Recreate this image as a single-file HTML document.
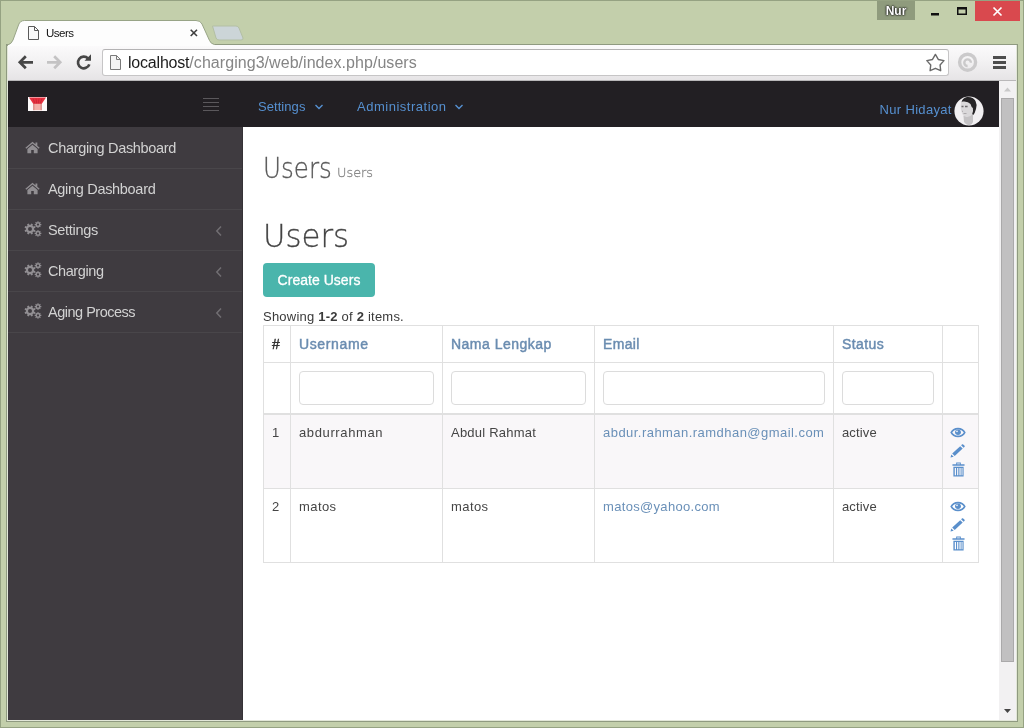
<!DOCTYPE html>
<html lang="en">
<head>
<meta charset="utf-8">
<title>Users</title>
<style>
*{box-sizing:border-box;margin:0;padding:0}
html,body{width:1024px;height:728px;overflow:hidden}
body{background:#c3cfab;font-family:"Liberation Sans",sans-serif;font-size:13px;color:#333;position:relative}
.abs{position:absolute}
#url,#tabtitle,#nurbadge,#page{will-change:transform}
span,a,b{white-space:nowrap}
/* window frame */
#frame-outer{left:0;top:0;width:1024px;height:728px;border:1px solid #95a282}
#frame-inner{left:6px;top:44px;width:1012px;height:678px;border:1px solid #8f9a80}
#frame-hl{left:7px;top:45px;width:1010px;height:676px;border:1px solid #e2e7d8;border-top:none}
#tabsvg{left:0;top:0;width:1024px;height:46px}
#tabtitle{left:46px;top:26px;font-size:11.500px;color:#111;line-height:15px}
#nurbadge{left:877px;top:1px;width:38px;height:19px;background:#8f9b7d;color:#fff;font-weight:bold;font-size:12px;line-height:20px;text-align:center;text-shadow:0 0 2px #1a1a1a,0 0 2px #1a1a1a,0 0 1px #1a1a1a}
#closebtn{left:975px;top:1px;width:45px;height:19.500px;background:#d9494e}
#toolbar{left:8px;top:45px;width:1008px;height:36px;background:linear-gradient(#fbfafb 0%,#f3f2f3 45%,#e6e4e6 100%);border-bottom:1px solid #b9b8b9}
#urlbox{left:102px;top:49px;width:847px;height:27px;background:#fff;border:1px solid #c6c5c6;border-top-color:#b4b3b4;border-radius:3px}
#url{left:128px;top:53px;font-size:16px;line-height:19px;color:#858585;white-space:nowrap}
#url b{font-weight:normal;color:#1c1c1c}
#page{left:8px;top:81px;width:991px;height:639px;background:#fff;overflow:hidden}
#scroll{left:999px;top:81px;width:17px;height:639px;background:#f2f1f2}
#thumb{left:1001px;top:98px;width:13px;height:564px;background:#c1c0c1;border:1px solid #aaa9aa}
#navbar{left:0;top:0;width:991px;height:46px;background:#221f23}
#sidebar{left:0;top:46px;width:235px;height:593px;background:#3f3b40;border-right:1px solid #353236;padding-top:1px}
.sitem{position:relative;height:41px;border-bottom:1px solid #49464a;color:#d2d2d2;font-size:14.500px;line-height:40px;padding-left:40px;white-space:nowrap}
.sitem svg.ic{position:absolute;left:16.500px;top:13px}
.sitem svg.hm{left:17px;top:12.500px;width:15px;height:13px}
.sitem svg.gr{left:15.500px;top:11px}
.sitem svg.ch{position:absolute;left:207px;top:15px}
.nl{color:#5690d0;font-size:13px;line-height:20px;white-space:nowrap}
.lt{font-family:"DejaVu Sans Light","DejaVu Sans","Liberation Sans",sans-serif;font-weight:200;-webkit-text-stroke:.3px currentColor;white-space:nowrap;transform-origin:0 0;line-height:1}
#btn{left:255px;top:182px;width:112px;height:34px;background:#4ab5ac;border-radius:4px;color:#fff;font-size:14px;line-height:34px;text-align:center;-webkit-text-stroke:.3px #fff}
#summary{left:255px;top:228px;font-size:13px;line-height:16px;color:#3a3a3a;white-space:nowrap}
table{position:absolute;left:255px;top:244px;width:716px;table-layout:fixed;border-collapse:separate;border-spacing:0;border-top:1px solid #e0e0e0;border-left:1px solid #e0e0e0;font-size:13px;color:#454545}
td,th{border-right:1px solid #e0e0e0;border-bottom:1px solid #e0e0e0;padding:8px;vertical-align:top;text-align:left;line-height:20px;white-space:nowrap;position:relative;overflow:visible}
th{height:37px;color:#6a8cb0;font-weight:normal;font-size:14px;-webkit-text-stroke:.45px #6a8cb0}
th.n{color:#333;font-size:14px;-webkit-text-stroke:.45px #333}
tr.f td{height:52px;border-bottom-width:2px}
tr.odd td,tr.r2 td{height:74px}
.inp{height:34px;border:1px solid #dcdcdc;border-radius:4px;background:#fff}
tr.odd td{background:#f9f7f9}
td a{color:#6a90b8;text-decoration:none}
svg.ai{position:absolute;left:7px}
#t-tab{letter-spacing:-0.51px}
#t-url1{letter-spacing:-0.20px}
#t-url2{letter-spacing:0.05px}
#t-nav1{letter-spacing:0.06px}
#t-nav2{letter-spacing:0.51px}
#t-nav3{letter-spacing:0.32px}
#t-s1{letter-spacing:-0.32px}
#t-s2{letter-spacing:-0.31px}
#t-s3{letter-spacing:-0.31px}
#t-s4{letter-spacing:-0.41px}
#t-s5{letter-spacing:-0.49px}
#t-btn{letter-spacing:0.03px}
#t-sum{letter-spacing:0.22px}
#t-th1{letter-spacing:0.63px}
#t-th2{letter-spacing:0.48px}
#t-th3{letter-spacing:0.36px}
#t-th4{letter-spacing:0.40px}
#t-a1{letter-spacing:0.62px}
#t-a2{letter-spacing:0.22px}
#t-a3{letter-spacing:0.46px}
#t-a4{letter-spacing:0.14px}
#t-b1{letter-spacing:0.42px}
#t-b2{letter-spacing:0.42px}
#t-b3{letter-spacing:0.32px}
#t-b4{letter-spacing:0.14px}
</style>
</head>
<body>
<div class="abs" id="frame-outer"></div>
<div class="abs" id="frame-inner"></div>
<div class="abs" id="frame-hl"></div>
<div class="abs" id="toolbar"></div>
<div class="abs" id="urlbox"></div>
<svg class="abs" id="tabsvg" viewBox="0 0 1024 46">
  <path d="M7.500 46 L7.500 45 Q11.500 44 13 40 L18.500 25 Q20 20.500 24.500 20.500 L196 20.500 Q200.500 20.500 202 24 L209.500 40.500 Q211 44 214.500 44.500 L214.500 46 Z" fill="#fdfdfd"/>
  <path d="M7.500 46 L7.500 45 Q11.500 44 13 40 L18.500 25 Q20 20.500 24.500 20.500 L196 20.500 Q200.500 20.500 202 24 L209.500 40.500 Q211 44 214.500 44.500" fill="none" stroke="#98a487" stroke-width="1"/>
  <path d="M212.500 26 L236 26 Q238 26 239 28 L243 38 Q243.500 40 241 40 L219 40 Q217 40 216 38 Z" fill="#ccd5d8" stroke="#b3bfa4" stroke-width="1"/>
  <path d="M28.500 26.500 h6 l4 4 v9 h-10 z" fill="#fafafa" stroke="#5a5a5a" stroke-width="1"/>
  <path d="M34.500 26.500 v4 h4" fill="none" stroke="#5a5a5a" stroke-width="1"/>
  <path d="M190.700 29.700 l6.300 6.300 M197 29.700 l-6.300 6.300" stroke="#3f3f3f" stroke-width="1.600"/>
</svg>
<div class="abs" id="tabtitle"><span id="t-tab">Users</span></div>
<div class="abs" id="nurbadge">Nur</div>
<div class="abs" id="closebtn"></div>
<svg class="abs" style="left:925px;top:0;width:99px;height:22px" viewBox="925 0 99 22">
  <rect x="931" y="13" width="8" height="2.500" fill="#111"/>
  <rect x="957.750" y="7.750" width="8.500" height="6.500" fill="none" stroke="#111" stroke-width="1.500"/>
  <rect x="957" y="7" width="10" height="2.500" fill="#111"/>
  <path d="M993.500 7.500 l8 8 M1001.500 7.500 l-8 8" stroke="#fff" stroke-width="1.700"/>
</svg>
<svg class="abs" style="left:8px;top:44px;width:1008px;height:37px" viewBox="8 44 1008 37">
  <path d="M33 62.300 H20.500 M25.800 56.300 L19.800 62.300 L25.800 68.300" fill="none" stroke="#474747" stroke-width="2.700"/>
  <path d="M47 62.300 H59.500 M54.200 56.300 L60.200 62.300 L54.200 68.300" fill="none" stroke="#c4c3c4" stroke-width="2.700"/>
  <path d="M88 58.500 A5.800 5.800 0 1 0 89.300 64.300" fill="none" stroke="#474747" stroke-width="2.700"/>
  <path d="M84.500 60.800 L91 60.800 L91 54.300 Z" fill="#474747"/>
  <path d="M110.500 55.500 h6 l4 4 v10 h-10 z" fill="#f4f4f4" stroke="#7a7a7a" stroke-width="1"/>
  <path d="M116.500 55.500 v4 h4" fill="none" stroke="#7a7a7a" stroke-width="1"/>
  <path d="M935.40 54.40 L938.28 59.44 L943.96 60.62 L940.06 64.91 L940.69 70.68 L935.40 68.30 L930.11 70.68 L930.74 64.91 L926.84 60.62 L932.52 59.44 Z" fill="#fff" stroke="#6a6a6a" stroke-width="1.400" stroke-linejoin="round"/>
  <circle cx="967.600" cy="62.200" r="8" fill="none" stroke="#cbcacb" stroke-width="3.400"/>
  <path d="M967.600 66 a3.300 3.300 0 1 1 3.300 -3.300" fill="none" stroke="#cbcacb" stroke-width="2.400"/>
  <rect x="993" y="56" width="13" height="3" fill="#4d4d4d"/>
  <rect x="993" y="61" width="13" height="3" fill="#4d4d4d"/>
  <rect x="993" y="66" width="13" height="3" fill="#4d4d4d"/>
</svg>
<div class="abs" id="url"><b id="t-url1">localhost</b><span id="t-url2">/charging3/web/index.php/users</span></div>

<div class="abs" id="page">
  <div class="abs" id="navbar">
    <svg class="abs" style="left:20px;top:16px;width:19px;height:14px" viewBox="0 0 19 14">
      <rect width="19" height="14" fill="#fdfafa"/>
      <path d="M5.500 6 H13.500 V13.200 H5.500 Z" fill="#f3b0a9"/>
      <path d="M5.800 6 V13.200 M13.200 6 V13.200" stroke="#cf6f6b" stroke-width=".9"/>
      <path d="M1 0.400 H18 L13.800 6.800 H5.200 Z" fill="#e8303f"/>
      <path d="M5 1.500 L7 6.500 M8 1.500 L8.700 6.500 M11 1.500 L10.300 6.500 M14 1.500 L12 6.500" stroke="#c42635" stroke-width=".8"/>
    </svg>
    <svg class="abs" style="left:194px;top:16px;width:18px;height:14px" viewBox="0 0 18 14">
      <path d="M1 1.500 H17 M1 5.500 H17 M1 9.500 H17 M1 13.500 H17" stroke="#5b585c" stroke-width="1"/>
    </svg>
    <div class="abs nl" style="left:250px;top:16px"><span id="t-nav1">Settings</span></div>
    <svg class="abs" style="left:306px;top:22px;width:10px;height:8px" viewBox="0 0 10 8"><path d="M1.500 2 L5 5.500 L8.500 2" fill="none" stroke="#5690d0" stroke-width="1.400"/></svg>
    <div class="abs nl" style="left:349px;top:16px"><span id="t-nav2">Administration</span></div>
    <svg class="abs" style="left:446px;top:22px;width:10px;height:8px" viewBox="0 0 10 8"><path d="M1.500 2 L5 5.500 L8.500 2" fill="none" stroke="#5690d0" stroke-width="1.400"/></svg>
    <div class="abs nl" style="left:871.600px;top:19px"><span id="t-nav3">Nur Hidayat</span></div>
    <svg class="abs" style="left:946px;top:14.500px;width:30px;height:30px" viewBox="0 0 30 30">
      <defs><clipPath id="av"><circle cx="15" cy="15" r="14.600"/></clipPath></defs>
      <circle cx="15" cy="15" r="14.600" fill="#f1eff1"/>
      <g clip-path="url(#av)">
      <path d="M9.500 20 L10 26 Q12 29 15 29.500 Q18 29 19 26 L19 18 Z" fill="#c4c2c4"/>
      <path d="M6.800 8 Q7.500 5 11 5 L16 6 Q18.500 9 18.500 13 L18.500 18 Q16 21.500 12.500 21 Q9 20.500 7.800 16.500 Q6.200 13 6.800 8 Z" fill="#dad8da"/>
      <path d="M7.500 6.500 Q8 2 13 1 Q19 0.500 21.500 5 Q23.500 9 22 13 Q21 17 19.300 19 L18.200 18 Q19.500 15 18.800 12 Q17.500 11.500 16.500 8 Q14 5 9 5.500 Q8 5.500 7.500 6.500 Z" fill="#262426"/>
      <path d="M7.500 10.500 h2 M11 10.500 h2.600" stroke="#6d6a6d" stroke-width="1.300"/>
      <path d="M9 15 l-1 .6 M9.500 17.500 h3" stroke="#a7a4a7" stroke-width=".9"/>
      </g>
    </svg>
  </div>
  <div class="abs" id="sidebar">
    <div class="sitem"><svg class="ic hm" width="16" height="14" viewBox="0 0 16 14"><path d="M8 0.800 L0.300 7.300 L1.300 8.400 L8 2.800 L14.700 8.400 L15.700 7.300 L13.200 5.200 V1.500 H11.200 V3.500 Z" fill="#918e92"/><path d="M8 4 L2.500 8.600 V13.300 H6.600 V9.600 H9.400 V13.300 H13.500 V8.600 Z" fill="#918e92"/></svg><span id="t-s1">Charging Dashboard</span></div>
    <div class="sitem"><svg class="ic hm" width="16" height="14" viewBox="0 0 16 14"><path d="M8 0.800 L0.300 7.300 L1.300 8.400 L8 2.800 L14.700 8.400 L15.700 7.300 L13.200 5.200 V1.500 H11.200 V3.500 Z" fill="#918e92"/><path d="M8 4 L2.500 8.600 V13.300 H6.600 V9.600 H9.400 V13.300 H13.500 V8.600 Z" fill="#918e92"/></svg><span id="t-s2">Aging Dashboard</span></div>
    <div class="sitem"><svg class="ic gr" width="18" height="16" viewBox="0 0 18 16"><path fill-rule="evenodd" fill="#918e92" d="M10.15 8.65 L11.45 9.29 L10.78 10.91 L9.40 10.46 L8.48 11.39 L8.94 12.77 L7.32 13.44 L6.67 12.15 L5.35 12.15 L4.71 13.45 L3.09 12.78 L3.54 11.40 L2.61 10.48 L1.23 10.94 L0.56 9.32 L1.85 8.67 L1.85 7.35 L0.55 6.71 L1.22 5.09 L2.60 5.54 L3.52 4.61 L3.06 3.23 L4.68 2.56 L5.33 3.85 L6.65 3.85 L7.29 2.55 L8.91 3.22 L8.46 4.60 L9.39 5.52 L10.77 5.06 L11.44 6.68 L10.15 7.33 Z M4.00 8.00 a2.00 2.00 0 1 0 4.00 0 a2.00 2.00 0 1 0 -4.00 0 Z M16.43 3.02 L17.36 3.07 L17.36 4.13 L16.43 4.18 L16.13 4.91 L16.75 5.60 L16.00 6.35 L15.31 5.73 L14.58 6.03 L14.53 6.96 L13.47 6.96 L13.42 6.03 L12.69 5.73 L12.00 6.35 L11.25 5.60 L11.87 4.91 L11.57 4.18 L10.64 4.13 L10.64 3.07 L11.57 3.02 L11.87 2.29 L11.25 1.60 L12.00 0.85 L12.69 1.47 L13.42 1.17 L13.47 0.24 L14.53 0.24 L14.58 1.17 L15.31 1.47 L16.00 0.85 L16.75 1.60 L16.13 2.29 Z M12.90 3.60 a1.10 1.10 0 1 0 2.20 0 a1.10 1.10 0 1 0 -2.20 0 Z M16.43 11.82 L17.36 11.87 L17.36 12.93 L16.43 12.98 L16.13 13.71 L16.75 14.40 L16.00 15.15 L15.31 14.53 L14.58 14.83 L14.53 15.76 L13.47 15.76 L13.42 14.83 L12.69 14.53 L12.00 15.15 L11.25 14.40 L11.87 13.71 L11.57 12.98 L10.64 12.93 L10.64 11.87 L11.57 11.82 L11.87 11.09 L11.25 10.40 L12.00 9.65 L12.69 10.27 L13.42 9.97 L13.47 9.04 L14.53 9.04 L14.58 9.97 L15.31 10.27 L16.00 9.65 L16.75 10.40 L16.13 11.09 Z M12.90 12.40 a1.10 1.10 0 1 0 2.20 0 a1.10 1.10 0 1 0 -2.20 0 Z"/></svg><span id="t-s3">Settings</span><svg class="ch" width="8" height="12" viewBox="0 0 8 12"><path d="M6 1.500 L1.800 6 L6 10.500" fill="none" stroke="#716e72" stroke-width="1.500"/></svg></div>
    <div class="sitem"><svg class="ic gr" width="18" height="16" viewBox="0 0 18 16"><path fill-rule="evenodd" fill="#918e92" d="M10.15 8.65 L11.45 9.29 L10.78 10.91 L9.40 10.46 L8.48 11.39 L8.94 12.77 L7.32 13.44 L6.67 12.15 L5.35 12.15 L4.71 13.45 L3.09 12.78 L3.54 11.40 L2.61 10.48 L1.23 10.94 L0.56 9.32 L1.85 8.67 L1.85 7.35 L0.55 6.71 L1.22 5.09 L2.60 5.54 L3.52 4.61 L3.06 3.23 L4.68 2.56 L5.33 3.85 L6.65 3.85 L7.29 2.55 L8.91 3.22 L8.46 4.60 L9.39 5.52 L10.77 5.06 L11.44 6.68 L10.15 7.33 Z M4.00 8.00 a2.00 2.00 0 1 0 4.00 0 a2.00 2.00 0 1 0 -4.00 0 Z M16.43 3.02 L17.36 3.07 L17.36 4.13 L16.43 4.18 L16.13 4.91 L16.75 5.60 L16.00 6.35 L15.31 5.73 L14.58 6.03 L14.53 6.96 L13.47 6.96 L13.42 6.03 L12.69 5.73 L12.00 6.35 L11.25 5.60 L11.87 4.91 L11.57 4.18 L10.64 4.13 L10.64 3.07 L11.57 3.02 L11.87 2.29 L11.25 1.60 L12.00 0.85 L12.69 1.47 L13.42 1.17 L13.47 0.24 L14.53 0.24 L14.58 1.17 L15.31 1.47 L16.00 0.85 L16.75 1.60 L16.13 2.29 Z M12.90 3.60 a1.10 1.10 0 1 0 2.20 0 a1.10 1.10 0 1 0 -2.20 0 Z M16.43 11.82 L17.36 11.87 L17.36 12.93 L16.43 12.98 L16.13 13.71 L16.75 14.40 L16.00 15.15 L15.31 14.53 L14.58 14.83 L14.53 15.76 L13.47 15.76 L13.42 14.83 L12.69 14.53 L12.00 15.15 L11.25 14.40 L11.87 13.71 L11.57 12.98 L10.64 12.93 L10.64 11.87 L11.57 11.82 L11.87 11.09 L11.25 10.40 L12.00 9.65 L12.69 10.27 L13.42 9.97 L13.47 9.04 L14.53 9.04 L14.58 9.97 L15.31 10.27 L16.00 9.65 L16.75 10.40 L16.13 11.09 Z M12.90 12.40 a1.10 1.10 0 1 0 2.20 0 a1.10 1.10 0 1 0 -2.20 0 Z"/></svg><span id="t-s4">Charging</span><svg class="ch" width="8" height="12" viewBox="0 0 8 12"><path d="M6 1.500 L1.800 6 L6 10.500" fill="none" stroke="#716e72" stroke-width="1.500"/></svg></div>
    <div class="sitem"><svg class="ic gr" width="18" height="16" viewBox="0 0 18 16"><path fill-rule="evenodd" fill="#918e92" d="M10.15 8.65 L11.45 9.29 L10.78 10.91 L9.40 10.46 L8.48 11.39 L8.94 12.77 L7.32 13.44 L6.67 12.15 L5.35 12.15 L4.71 13.45 L3.09 12.78 L3.54 11.40 L2.61 10.48 L1.23 10.94 L0.56 9.32 L1.85 8.67 L1.85 7.35 L0.55 6.71 L1.22 5.09 L2.60 5.54 L3.52 4.61 L3.06 3.23 L4.68 2.56 L5.33 3.85 L6.65 3.85 L7.29 2.55 L8.91 3.22 L8.46 4.60 L9.39 5.52 L10.77 5.06 L11.44 6.68 L10.15 7.33 Z M4.00 8.00 a2.00 2.00 0 1 0 4.00 0 a2.00 2.00 0 1 0 -4.00 0 Z M16.43 3.02 L17.36 3.07 L17.36 4.13 L16.43 4.18 L16.13 4.91 L16.75 5.60 L16.00 6.35 L15.31 5.73 L14.58 6.03 L14.53 6.96 L13.47 6.96 L13.42 6.03 L12.69 5.73 L12.00 6.35 L11.25 5.60 L11.87 4.91 L11.57 4.18 L10.64 4.13 L10.64 3.07 L11.57 3.02 L11.87 2.29 L11.25 1.60 L12.00 0.85 L12.69 1.47 L13.42 1.17 L13.47 0.24 L14.53 0.24 L14.58 1.17 L15.31 1.47 L16.00 0.85 L16.75 1.60 L16.13 2.29 Z M12.90 3.60 a1.10 1.10 0 1 0 2.20 0 a1.10 1.10 0 1 0 -2.20 0 Z M16.43 11.82 L17.36 11.87 L17.36 12.93 L16.43 12.98 L16.13 13.71 L16.75 14.40 L16.00 15.15 L15.31 14.53 L14.58 14.83 L14.53 15.76 L13.47 15.76 L13.42 14.83 L12.69 14.53 L12.00 15.15 L11.25 14.40 L11.87 13.71 L11.57 12.98 L10.64 12.93 L10.64 11.87 L11.57 11.82 L11.87 11.09 L11.25 10.40 L12.00 9.65 L12.69 10.27 L13.42 9.97 L13.47 9.04 L14.53 9.04 L14.58 9.97 L15.31 10.27 L16.00 9.65 L16.75 10.40 L16.13 11.09 Z M12.90 12.40 a1.10 1.10 0 1 0 2.20 0 a1.10 1.10 0 1 0 -2.20 0 Z"/></svg><span id="t-s5">Aging Process</span><svg class="ch" width="8" height="12" viewBox="0 0 8 12"><path d="M6 1.500 L1.800 6 L6 10.500" fill="none" stroke="#716e72" stroke-width="1.500"/></svg></div>
  </div>
  <h1 class="abs lt" id="h1a" style="left:255px;top:74px;font-size:28px;color:#5a5a5a;transform:scaleX(.878)">Users</h1>
  <div class="abs lt" id="h1s" style="left:329px;top:85px;font-size:13px;color:#888;transform:scaleX(.99)">Users</div>
  <h1 class="abs lt" id="h1b" style="left:254.500px;top:138.500px;font-size:32.500px;color:#444;transform:scaleX(.945)">Users</h1>
  <div class="abs" id="btn"><span id="t-btn">Create Users</span></div>
  <div class="abs" id="summary"><span id="t-sum">Showing <b>1-2</b> of <b>2</b> items.</span></div>
  <table>
    <colgroup><col style="width:27px"><col style="width:152px"><col style="width:152px"><col style="width:239px"><col style="width:109px"><col style="width:36px"></colgroup>
    <tr><th class="n">#</th><th><span id="t-th1">Username</span></th><th><span id="t-th2">Nama Lengkap</span></th><th><span id="t-th3">Email</span></th><th><span id="t-th4">Status</span></th><th></th></tr>
    <tr class="f"><td></td><td><div class="inp"></div></td><td><div class="inp"></div></td><td><div class="inp"></div></td><td><div class="inp"></div></td><td></td></tr>
    <tr class="odd"><td>1</td><td><span id="t-a1">abdurrahman</span></td><td><span id="t-a2">Abdul Rahmat</span></td><td><a id="t-a3">abdur.rahman.ramdhan@gmail.com</a></td><td><span id="t-a4">active</span></td><td><svg class="ai" style="top:12px" width="16" height="11" viewBox="0 0 16 12" preserveAspectRatio="none"><path fill-rule="evenodd" fill="#5a8fcb" d="M8 0.800 C4.500 0.800 1.700 3 0.300 6 C1.700 9 4.500 11.200 8 11.200 C11.500 11.200 14.300 9 15.700 6 C14.300 3 11.500 0.800 8 0.800 Z M8 2.600 C5.600 2.600 3.400 3.900 2.200 6 C3.400 8.100 5.600 9.400 8 9.400 C10.400 9.400 12.600 8.100 13.800 6 C12.600 3.900 10.400 2.600 8 2.600 Z"/><circle cx="8" cy="5.700" r="2.900" fill="#5a8fcb"/><circle cx="7" cy="4.700" r="1" fill="#dfe8f3"/></svg><svg class="ai" style="top:29px" width="16" height="14" viewBox="0 0 16 15" preserveAspectRatio="none"><path fill="#5a8fcb" d="M0.500 14.500 L1.300 11.300 L3.700 13.700 Z M2.200 10.300 L10.200 2.300 L12.700 4.800 L4.700 12.800 Z M11.100 1.400 L12.200 0.400 Q12.700 0 13.200 0.500 L14.600 1.900 Q15 2.400 14.600 2.900 L13.600 3.900 Z"/></svg><svg class="ai" style="top:47px;left:9px" width="13" height="15" viewBox="0 0 14 16" preserveAspectRatio="none"><path fill-rule="evenodd" fill="#5a8fcb" d="M4.500 0.500 H9.500 V2.500 H13.500 V4 H0.500 V2.500 H4.500 Z M5.500 1.500 V2.500 H8.500 V1.500 Z M1.500 5 H12.500 V15.500 H1.500 Z M3 6.300 V14.200 H4.300 V6.300 Z M5.500 6.300 V14.200 H6.800 V6.300 Z M8 6.300 V14.200 H9.300 V6.300 Z M10.300 6.300 V14.200 H11.300 V6.300 Z"/></svg></td></tr>
    <tr class="r2"><td>2</td><td><span id="t-b1">matos</span></td><td><span id="t-b2">matos</span></td><td><a id="t-b3">matos@yahoo.com</a></td><td><span id="t-b4">active</span></td><td><svg class="ai" style="top:12px" width="16" height="11" viewBox="0 0 16 12" preserveAspectRatio="none"><path fill-rule="evenodd" fill="#5a8fcb" d="M8 0.800 C4.500 0.800 1.700 3 0.300 6 C1.700 9 4.500 11.200 8 11.200 C11.500 11.200 14.300 9 15.700 6 C14.300 3 11.500 0.800 8 0.800 Z M8 2.600 C5.600 2.600 3.400 3.900 2.200 6 C3.400 8.100 5.600 9.400 8 9.400 C10.400 9.400 12.600 8.100 13.800 6 C12.600 3.900 10.400 2.600 8 2.600 Z"/><circle cx="8" cy="5.700" r="2.900" fill="#5a8fcb"/><circle cx="7" cy="4.700" r="1" fill="#dfe8f3"/></svg><svg class="ai" style="top:29px" width="16" height="14" viewBox="0 0 16 15" preserveAspectRatio="none"><path fill="#5a8fcb" d="M0.500 14.500 L1.300 11.300 L3.700 13.700 Z M2.200 10.300 L10.200 2.300 L12.700 4.800 L4.700 12.800 Z M11.100 1.400 L12.200 0.400 Q12.700 0 13.200 0.500 L14.600 1.900 Q15 2.400 14.600 2.900 L13.600 3.900 Z"/></svg><svg class="ai" style="top:47px;left:9px" width="13" height="15" viewBox="0 0 14 16" preserveAspectRatio="none"><path fill-rule="evenodd" fill="#5a8fcb" d="M4.500 0.500 H9.500 V2.500 H13.500 V4 H0.500 V2.500 H4.500 Z M5.500 1.500 V2.500 H8.500 V1.500 Z M1.500 5 H12.500 V15.500 H1.500 Z M3 6.300 V14.200 H4.300 V6.300 Z M5.500 6.300 V14.200 H6.800 V6.300 Z M8 6.300 V14.200 H9.300 V6.300 Z M10.300 6.300 V14.200 H11.300 V6.300 Z"/></svg></td></tr>
  </table>
</div>
<div class="abs" id="scroll"></div>
<div class="abs" id="thumb"></div>
<svg class="abs" style="left:999px;top:81px;width:17px;height:639px" viewBox="0 0 17 639">
  <path d="M5 10.500 L8.500 6.500 L12 10.500 Z" fill="#c9c9c9"/>
  <path d="M5 628 L12 628 L8.500 632 Z" fill="#454545"/>
</svg>
</body>
</html>
